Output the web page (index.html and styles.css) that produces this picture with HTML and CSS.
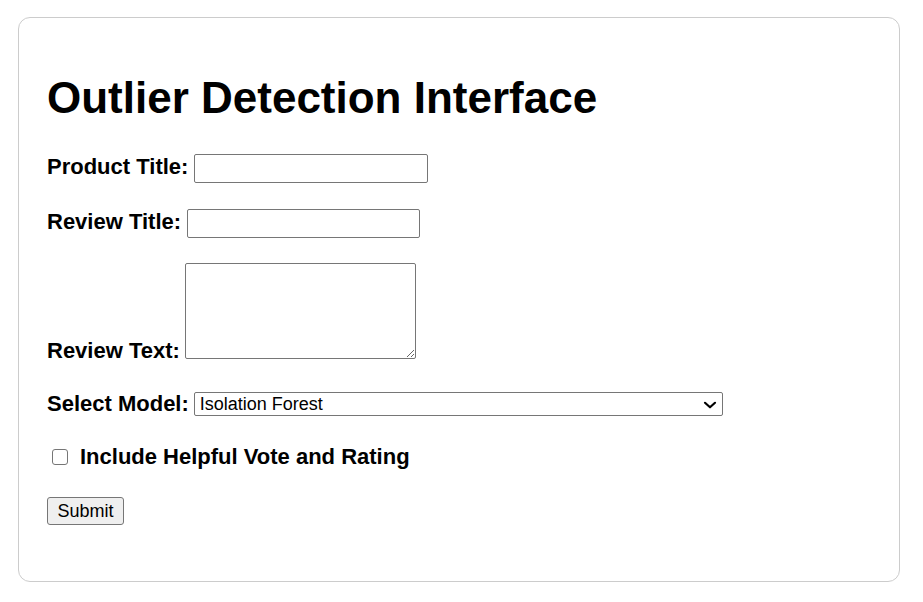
FILE: index.html
```html
<!DOCTYPE html>
<html lang="en">
<head>
<meta charset="utf-8">
<title>Outlier Detection Interface</title>
<link rel="stylesheet" href="styles.css">
</head>
<body>
<div class="card">
  <h1 class="title">Outlier Detection Interface</h1>
  <form class="form">
    <div class="field field-product">
      <label class="label label-raised" for="product">Product Title:</label>
      <input class="text-input input-product" id="product" type="text">
    </div>
    <div class="field field-review-title">
      <label class="label label-raised" for="rtitle">Review Title:</label>
      <input class="text-input input-review" id="rtitle" type="text">
    </div>
    <div class="field field-text">
      <label class="label label-bottom" for="rtext">Review Text:</label>
      <textarea class="text-area" id="rtext"></textarea>
    </div>
    <div class="field field-model">
      <label class="label" for="model">Select Model:</label>
      <div class="select-wrap">
        <select class="select" id="model">
          <option>Isolation Forest</option>
          <option>One-Class SVM</option>
          <option>Local Outlier Factor</option>
        </select>
        <svg class="chevron" width="14" height="8" viewBox="0 0 14 8" aria-hidden="true">
          <path d="M2 1.8 L7 6.3 L12 1.8" fill="none" stroke="#000" stroke-width="2.2" stroke-linecap="round" stroke-linejoin="round"/>
        </svg>
      </div>
    </div>
    <div class="field field-check">
      <input class="checkbox" id="include" type="checkbox">
      <label class="label" for="include">Include Helpful Vote and Rating</label>
    </div>
    <div class="field field-submit">
      <button class="submit" type="button">Submit</button>
    </div>
  </form>
</div>
</body>
</html>
```
FILE: styles.css
```css
html, body {
  margin: 0;
  padding: 0;
  background: #ffffff;
}

body {
  font-family: "Liberation Sans", Arial, sans-serif;
  font-size: 22px;
  color: #000000;
}

.card {
  margin: 17px 23px 20px 18px;
  border: 1px solid #cccccc;
  border-radius: 12px;
  padding: 1px 28px 30px 28px;
  height: 532px;
}

.title {
  font-size: 44px;
  font-weight: bold;
  margin: 54px 0 0 0;
  line-height: 50px;
}

.form {
  margin: 0;
}

.field {
  display: flex;
  align-items: flex-end;
}

.label {
  font-weight: bold;
  font-size: 22px;
  line-height: 25px;
}

.label-raised {
  padding-bottom: 4px;
}

.label-bottom {
  line-height: 16px;
}

.field-product {
  margin-top: 31px;
  align-items: center;
}

.field-review-title {
  margin-top: 26px;
  align-items: center;
}

.field-text {
  margin-top: 25px;
}

.field-model {
  margin-top: 32px;
  align-items: center;
}

.field-check {
  margin-top: 28px;
  align-items: center;
}

.field-submit {
  margin-top: 28px;
}

.text-input {
  box-sizing: border-box;
  height: 29px;
  border: 1px solid #767676;
  border-radius: 2px;
  padding: 1px 3px;
  font-family: "Liberation Sans", Arial, sans-serif;
  font-size: 20px;
  margin: 0;
}

.input-product {
  width: 234px;
  margin-left: 6px;
}

.input-review {
  width: 233px;
  margin-left: 6px;
}

.text-area {
  box-sizing: border-box;
  width: 231px;
  height: 96px;
  border: 1px solid #767676;
  border-radius: 2px;
  margin: 0 0 0 5px;
  padding: 2px;
  font-family: "Liberation Sans", Arial, sans-serif;
  font-size: 20px;
}

.select-wrap {
  position: relative;
  display: flex;
  margin-left: 5px;
  height: 24px;
}

.select {
  -webkit-appearance: none;
  appearance: none;
  box-sizing: border-box;
  width: 529px;
  height: 24px;
  margin: 0;
  border: 1px solid #767676;
  border-radius: 2px;
  background: #ffffff;
  font-family: "Liberation Sans", Arial, sans-serif;
  font-size: 18px;
  line-height: 21px;
  color: #000000;
  padding: 1px 24px 0 5px;
}

.chevron {
  position: absolute;
  right: 6px;
  top: 9px;
  pointer-events: none;
}

.checkbox {
  -webkit-appearance: none;
  appearance: none;
  box-sizing: border-box;
  width: 16px;
  height: 16px;
  border: 1px solid #767676;
  border-radius: 3px;
  background: #ffffff;
  margin: 0 12px 0 5px;
}

.submit {
  box-sizing: border-box;
  width: 77px;
  height: 28px;
  padding: 1px 6px;
  border: 1px solid #767676;
  border-radius: 3px;
  background: #efefef;
  font-family: "Liberation Sans", Arial, sans-serif;
  font-size: 18px;
  color: #000000;
}
```
